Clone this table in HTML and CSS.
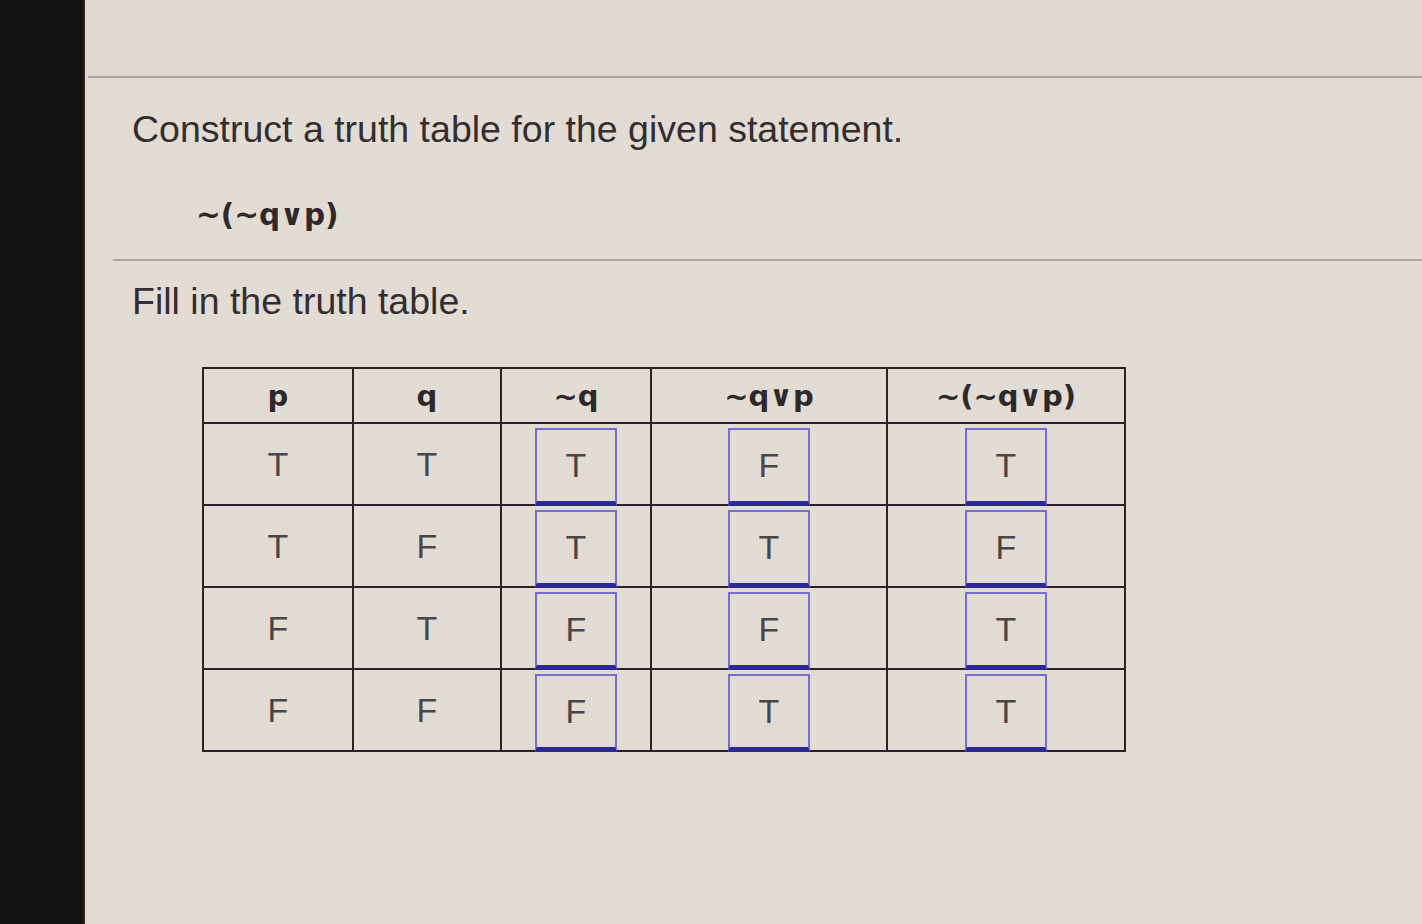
FILE: index.html
```html
<!DOCTYPE html>
<html lang="en">
<head>
<meta charset="utf-8">
<title>Truth table</title>
<link rel="stylesheet" href="styles.css">
</head>
<body>
<div class="screen">
  <aside class="bezel"></aside>
  <main class="panel">
    <div class="topbar"></div>
    <section class="question">
      <p class="prompt">Construct a truth table for the given statement.</p>
      <p class="statement">~(~q∨p)</p>
    </section>
    <hr class="divider">
    <section class="task">
      <p class="prompt">Fill in the truth table.</p>
      <table class="truth">
        <colgroup>
          <col class="c1"><col class="c2"><col class="c3"><col class="c4"><col class="c5">
        </colgroup>
        <thead>
          <tr><th>p</th><th>q</th><th>~q</th><th>~q∨p</th><th>~(~q∨p)</th></tr>
        </thead>
        <tbody>
          <tr>
            <td>T</td><td>T</td>
            <td class="entry"><span class="box">T</span></td>
            <td class="entry"><span class="box">F</span></td>
            <td class="entry"><span class="box">T</span></td>
          </tr>
          <tr>
            <td>T</td><td>F</td>
            <td class="entry"><span class="box">T</span></td>
            <td class="entry"><span class="box">T</span></td>
            <td class="entry"><span class="box">F</span></td>
          </tr>
          <tr>
            <td>F</td><td>T</td>
            <td class="entry"><span class="box">F</span></td>
            <td class="entry"><span class="box">F</span></td>
            <td class="entry"><span class="box">T</span></td>
          </tr>
          <tr>
            <td>F</td><td>F</td>
            <td class="entry"><span class="box">F</span></td>
            <td class="entry"><span class="box">T</span></td>
            <td class="entry"><span class="box">T</span></td>
          </tr>
        </tbody>
      </table>
    </section>
  </main>
</div>
</body>
</html>
```

FILE: styles.css
```css
html, body {
  margin: 0;
  padding: 0;
  height: 100%;
}
body {
  background: #e2dbd3;
  font-family: "Liberation Sans", Arial, sans-serif;
  color: #332d30;
  overflow: hidden;
}
.screen {
  display: flex;
  height: 924px;
}
.bezel {
  width: 85px;
  flex: 0 0 85px;
  background: #111315;
  border-right: 2px solid #3a1f18;
  box-sizing: border-box;
}
.panel {
  flex: 1;
  display: flex;
  flex-direction: column;
  background: #e3dcd4;
}
.topbar {
  height: 76px;
  background: #e0d8d0;
  border-bottom: 2px solid #a9a3a3;
  margin-left: 3px;
}
.question {
  padding-left: 47px;
}
.prompt {
  margin: 0;
  font-size: 37.5px;
  line-height: 42px;
  color: #342e31;
}
.question .prompt {
  margin-top: 30px;
}
.statement {
  margin: 46px 0 0 64px;
  font-family: "DejaVu Sans", Verdana, sans-serif;
  font-weight: bold;
  font-size: 29.5px;
  line-height: 38px;
  color: #2f292c;
}
.divider {
  margin: 25px 0 0 28px;
  border: 0;
  border-top: 2px solid #aca6a6;
  height: 0;
}
.task {
  padding-left: 47px;
}
.task .prompt {
  margin-top: 19px;
}
.truth {
  margin: 45px 0 0 70px;
  border-collapse: collapse;
  border: 2px solid #2a2226;
  table-layout: fixed;
  width: 922px;
}
.c1 { width: 150px; }
.c2 { width: 148px; }
.c3 { width: 150px; }
.c4 { width: 236px; }
.c5 { width: 238px; }
.truth th {
  height: 53px;
  padding: 0;
  border: 2px solid #2a2226;
  font-family: "DejaVu Sans", Verdana, sans-serif;
  font-weight: bold;
  font-size: 29px;
  color: #2e282b;
  text-align: center;
  vertical-align: middle;
}
.truth td {
  height: 80px;
  padding: 0;
  border: 2px solid #2a2226;
  text-align: center;
  vertical-align: middle;
  font-size: 34px;
  color: #4a4548;
}
.truth td.entry {
  vertical-align: top;
  padding-top: 4px;
  height: 76px;
}
.box {
  display: inline-flex;
  align-items: center;
  justify-content: center;
  box-sizing: border-box;
  width: 82px;
  height: 78px;
  margin-bottom: -2px;
  border: 2px solid #736fcf;
  border-bottom: 5px solid #2c2894;
  color: #4a4548;
}
```
